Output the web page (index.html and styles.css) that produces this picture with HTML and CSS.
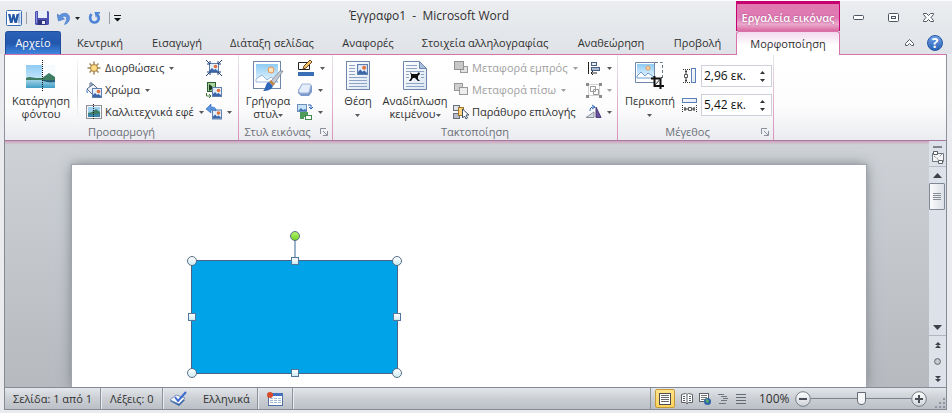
FILE: index.html
```html
<!DOCTYPE html>
<html lang="el">
<head>
<meta charset="utf-8">
<meta name="viewport" content="width=device-width, initial-scale=1">
<title>Έγγραφο1 - Microsoft Word</title>
<link rel="stylesheet" href="styles.css">
</head>
<body>
<svg class="defs" aria-hidden="true">
  <defs>
    <linearGradient id="sky" x1="0" y1="0" x2="0" y2="1"><stop offset="0" stop-color="#8ecbf3"/><stop offset="1" stop-color="#eaf7ff"/></linearGradient>
    <linearGradient id="sea" x1="0" y1="0" x2="0" y2="1"><stop offset="0" stop-color="#b8e0f0"/><stop offset="1" stop-color="#3f9cc4"/></linearGradient>
    <linearGradient id="paper" x1="0" y1="0" x2="1" y2="1"><stop offset="0" stop-color="#ffffff"/><stop offset="1" stop-color="#dbe6f3"/></linearGradient>
    <linearGradient id="knob" x1="0" y1="0" x2="0" y2="1"><stop offset="0" stop-color="#ffffff"/><stop offset="1" stop-color="#cfd3d9"/></linearGradient>
    <symbol id="mini" viewBox="0 0 10 10">
      <rect x=".5" y=".5" width="9" height="9" fill="#e4eefb" stroke="#5f7fae"/>
      <path d="M1 9V7l2-2 2 2 1.500-1L9 8v1z" fill="#3a66a8"/>
      <circle cx="6.500" cy="3.500" r="1.800" fill="#e2703a"/>
    </symbol>
    <symbol id="caret" viewBox="0 0 5 3"><path d="M0 0h5L2.500 3z" fill="currentColor"/></symbol>
  </defs>
</svg>

<div class="window">
  <header class="chrome">
    <div class="title-row">
      <div class="quick">
        <svg class="app" width="17" height="17" viewBox="0 0 17 17" aria-hidden="true"><rect x=".5" y=".5" width="15" height="15" rx="1" fill="#fff" stroke="#3c6eb4"/><path d="M12 2h3v13h-3" fill="#d4e3f5"/><path d="M12 4h2M12 6h2M12 8h2M12 10h2M12 12h2" stroke="#7097cc"/><path d="M2 4h2.500l1 5 1-5h2l1 5 1-5H13l-2 9H8.500l-1-4-1 4H4z" fill="#2458a6"/></svg>
        <span class="bar"></span>
        <button type="button" aria-label="Αποθήκευση"><svg width="14" height="14" viewBox="0 0 14 14"><path d="M0 1l1-1h12l1 1v12l-1 1H1l-1-1z" fill="#4a50b0"/><path d="M3 0h9v7H3z" fill="#e9effa"/><path d="M1 1h1v11H1z" fill="#8d92dd"/><path d="M3 9h8v5H3z" fill="#30347e"/><path d="M7 10h3v3H7z" fill="#e8e8f4"/></svg></button>
        <button type="button" class="undo" aria-label="Αναίρεση"><svg width="14" height="13" viewBox="0 0 14 13"><path d="M0 2l1.500 7 6-2-2.500-2c2-1.500 4.500-1 4.500 1.500S8.500 10 7.500 12.500C11 11.500 12.500 9 12.500 6 12.500 1 7-.5 2.500 3.500z" fill="#5f92df" stroke="#3b70c2" stroke-width=".6"/></svg><svg class="caret" width="5" height="3"><use href="#caret"/></svg></button>
        <button type="button" aria-label="Επανάληψη"><svg width="13" height="13" viewBox="0 0 13 13"><path d="M3.500 2C1 5 2 10.500 6.500 10.500S12 5 9 2.500" fill="none" stroke="#4f85d6" stroke-width="2.600"/><path d="M6.500 0H12v1.500L9.500 2 8 6.500z" fill="#4f85d6"/></svg></button>
        <span class="bar"></span>
        <button type="button" class="more" aria-label="Προσαρμογή γραμμής"><svg width="7" height="7" viewBox="0 0 7 7"><path d="M0 0h7v1H0zM0 3h7L3.500 6.500z" fill="#111"/></svg></button>
      </div>
      <h1>Έγγραφο1&nbsp; -&nbsp; Microsoft Word</h1>
    </div>
    <div class="context-title">Εργαλεία εικόνας</div>
    <div class="win-buttons">
      <button type="button" aria-label="Ελαχιστοποίηση"><svg width="12" height="6" viewBox="0 0 12 6"><rect x=".5" y=".5" width="10" height="4" rx="1" fill="#fff" stroke="#4d5563"/></svg></button>
      <button type="button" aria-label="Μεγιστοποίηση"><svg width="12" height="10" viewBox="0 0 12 10"><rect x=".5" y=".5" width="10" height="8" rx="1" fill="#fff" stroke="#4d5563"/><rect x="3.500" y="3.500" width="4" height="2" fill="#fff" stroke="#4d5563"/></svg></button>
      <button type="button" aria-label="Κλείσιμο"><svg width="12" height="10" viewBox="0 0 12 10"><path d="M.5.5h3l2 2 2-2h3v1L8 4.500l2.500 3v1h-3l-2-2-2 2h-3v-1L3 4.500.5 1.500z" fill="#fff" stroke="#4d5563"/></svg></button>
    </div>
    <nav class="tabs" aria-label="Κορδέλα">
      <a class="file" href="#file">Αρχείο</a>
      <a href="#home">Κεντρική</a>
      <a href="#insert">Εισαγωγή</a>
      <a href="#layout">Διάταξη σελίδας</a>
      <a href="#refs">Αναφορές</a>
      <a href="#mail">Στοιχεία αλληλογραφίας</a>
      <a href="#review">Αναθεώρηση</a>
      <a href="#view">Προβολή</a>
    </nav>
    <a class="context-tab" href="#format" aria-current="page">Μορφοποίηση</a>
    <div class="help">
      <button type="button" aria-label="Ελαχιστοποίηση κορδέλας"><svg width="9" height="7" viewBox="0 0 9 7"><path d="M.5 4.500l4-4 4 4v2h-2l-2-2-2 2h-2z" fill="#fff" stroke="#555c68"/></svg></button>
      <button type="button" class="help-button" aria-label="Βοήθεια">?</button>
    </div>
  </header>

  <section class="ribbon">
    <section class="group adjust">
      <div class="tools">
        <button type="button" class="big ruled">
          <svg width="30" height="32" viewBox="0 0 30 32"><rect x="0" y="5" width="16" height="23" fill="url(#sky)"/><rect x="16" y="5" width="13" height="23" fill="#e8f4fb" opacity=".35"/><path d="M0 18h29v10H0z" fill="url(#sea)"/><path d="M16 18l7-5 3 2 3 2v3H0v-2c4-2 7 0 10 0z" fill="#3f7d63"/><path d="M17 20h12v2c-5 1-9 0-12-1z" fill="#2b6178"/><path d="M16.500 0v32" stroke="#111" stroke-dasharray="1 1"/></svg>
          <span>Κατάργηση<br>φόντου</span>
        </button>
        <div class="stack">
          <button type="button" class="row"><svg width="16" height="16" viewBox="0 0 16 16"><path d="M8 1.500v13M1.500 8h13M3.500 3.500l9 9M12.500 3.500l-9 9" stroke="#a3865a" stroke-width="1.500"/><circle cx="8" cy="8" r="3.500" fill="#ffdc82" stroke="#a3803f"/></svg>Διορθώσεις<svg class="caret" width="5" height="3"><use href="#caret"/></svg></button>
          <button type="button" class="row"><svg width="16" height="16" viewBox="0 0 16 16"><path d="M1 7l6-5 4 4-5 6z" fill="#eef2f8" stroke="#566a8c"/><path d="M4 5V1h2v3" fill="none" stroke="#566a8c"/><path d="M1 7c-1 2-1 4 1 4z" fill="#3a76c0"/><use href="#mini" x="6" y="6" width="10" height="10"/></svg>Χρώμα<svg class="caret" width="5" height="3"><use href="#caret"/></svg></button>
          <button type="button" class="row"><svg width="16" height="16" viewBox="0 0 16 16"><rect x=".5" y="1.500" width="15" height="13" fill="#f7f7f7" stroke="#8d9096"/><path d="M2 3h12v10H2z" fill="#9fd3ef"/><path d="M2 9l4-1 4-3 4 3v2H2z" fill="#3e7d68"/><path d="M2 10h12v3H2z" fill="#3a84a8"/><path d="M7.500 0v16" stroke="#222" stroke-dasharray="1 1"/></svg>Καλλιτεχνικά εφέ<svg class="caret" width="5" height="3"><use href="#caret"/></svg></button>
        </div>
        <div class="stack">
          <button type="button" class="row" aria-label="Συμπίεση εικόνων"><svg width="16" height="16" viewBox="0 0 16 16"><use href="#mini" x="3" y="3" width="10" height="10"/><path d="M0 0l4 4M4 1v3H1M16 0l-4 4M12 1v3h3M0 16l4-4M4 15v-3H1M16 16l-4-4M12 15v-3h3" fill="none" stroke="#1e3f7a"/></svg></button>
          <button type="button" class="row" aria-label="Αλλαγή εικόνας"><svg width="16" height="16" viewBox="0 0 16 16"><rect x="1.500" y=".5" width="8" height="9" fill="#a9d39b" stroke="#2b5e35"/><path d="M3 2l5 4-5 3z" fill="#16391f"/><use href="#mini" x="6" y="5" width="10" height="10"/><path d="M.5 11v3h4M3 12l2 2-2 2" fill="none" stroke="#3f7a3a"/></svg></button>
          <button type="button" class="row" aria-label="Επαναφορά εικόνας"><svg width="16" height="16" viewBox="0 0 16 16"><use href="#mini" x="6" y="5" width="10" height="11"/><path d="M0 5l5-5v3c4 0 5 1 5 4-1-1-3-1-5-1v3z" fill="#5b94e0" stroke="#2d66b5" stroke-width=".6"/></svg><svg class="caret" width="5" height="3"><use href="#caret"/></svg></button>
        </div>
      </div>
      <h2>Προσαρμογή</h2>
    </section>

    <section class="group styles">
      <div class="tools">
        <button type="button" class="big">
          <svg width="32" height="32" viewBox="0 0 32 32"><rect x="1.500" y="1.500" width="27" height="27" fill="#fff" stroke="#6e87ab"/><rect x="4" y="4" width="22" height="18" fill="url(#sky)"/><path d="M4 22v-3l6-4 5 5 4-3 7 5z" fill="#fff" stroke="#7ba4d2" stroke-width=".8"/><circle cx="19" cy="10" r="3" fill="#ffe2bb" stroke="#ea9450"/><path d="M31 11l-9 13-3-3 9-10z" fill="#c5ccd6" stroke="#6d7686" stroke-width=".7"/><path d="M19 20l4 4-2 2-4-4z" fill="#c08446"/><path d="M17 22l4 4c-1 4-6 5-10 5 3-2 2-8 6-9z" fill="#2e66b8"/></svg>
          <span>Γρήγορα<br>στυλ<svg class="caret" width="5" height="3"><use href="#caret"/></svg></span>
        </button>
        <div class="stack">
          <button type="button" class="row" aria-label="Περίγραμμα εικόνας"><svg width="18" height="16" viewBox="0 0 18 16"><path d="M1.500 2.500h11v7h-11z" fill="#fff" stroke="#222"/><path d="M6 9l1-3 6-6 2 2-6 6z" fill="#f5c46a" stroke="#70481f"/><path d="M1 12h16v4H1z" fill="#3a6fb8"/></svg><svg class="caret" width="5" height="3"><use href="#caret"/></svg></button>
          <button type="button" class="row" aria-label="Εφέ εικόνας"><svg width="16" height="16" viewBox="0 0 16 16"><path d="M5 2h8l2 2v6l-3 4H4l-3-3V8z" fill="#7e9acb"/><path d="M5 2h8l1 1-2 7-1 1H3L1.500 9z" fill="#e3edfb" stroke="#a3b7da"/></svg><svg class="caret" width="5" height="3"><use href="#caret"/></svg></button>
          <button type="button" class="row" aria-label="Διάταξη εικόνας"><svg width="16" height="16" viewBox="0 0 16 16"><rect x=".5" y=".5" width="9" height="7" fill="#c6e3fa" stroke="#6f8fb8"/><path d="M1 7l3-3 2 2 2-1 2 2z" fill="#3f73b4"/><path d="M11 1h3v4M12 3l2 2 2-2" fill="none" stroke="#2c62b4"/><path d="M3 8h8v3h4v2H7v2H3z" fill="#4f9b59"/><rect x="8.500" y="11.500" width="6" height="4" fill="#fff" stroke="#448a50"/></svg><svg class="caret" width="5" height="3"><use href="#caret"/></svg></button>
        </div>
      </div>
      <h2>Στυλ εικόνας</h2>
      <button type="button" class="launcher" aria-label="Μορφοποίηση εικόνας"><svg width="8" height="8" viewBox="0 0 8 8"><path d="M.5 6V.5H6M3 3l4 4M7.500 3v4.500H3" fill="none" stroke="#888f99"/></svg></button>
    </section>

    <section class="group arrange">
      <div class="tools">
        <button type="button" class="big">
          <svg width="24" height="30" viewBox="0 0 24 30"><rect x=".5" y=".5" width="23" height="28" fill="url(#paper)" stroke="#6e87ab"/><path d="M3 4.500h6M3 7.500h6M3 10.500h6M3 13.500h6M3 16.500h18M3 19.500h18M3 22.500h18M3 25.500h18" stroke="#8ea4c4"/><use href="#mini" x="11" y="3" width="11" height="11"/></svg>
          <span>Θέση<br><svg class="caret" width="5" height="3"><use href="#caret"/></svg></span>
        </button>
        <button type="button" class="big">
          <svg width="24" height="30" viewBox="0 0 24 30"><path d="M.5.5h16l7 7v21H.5z" fill="url(#paper)" stroke="#6e87ab"/><path d="M16.500.5v7h7z" fill="#a8c0de" stroke="#6e87ab"/><path d="M3 4.500h11M3 7.500h11M3 10.500h18M3 13.500h3M18 13.500h3M3 16.500h3M18 16.500h3M3 22.500h18M3 25.500h18" stroke="#8ea4c4"/><path d="M7 11l2 2h5l2-2 1 2-2 2v3l2 2h-2l-3-3h-2l-2 3H6l2-3v-3z" fill="#111"/></svg>
          <span>Αναδίπλωση<br>κειμένου<svg class="caret" width="5" height="3"><use href="#caret"/></svg></span>
        </button>
        <div class="stack">
          <button type="button" class="row" disabled><svg width="16" height="16" viewBox="0 0 16 16"><rect x="7.500" y="6.500" width="7" height="6" fill="#e2e2e2" stroke="#9b9b9b"/><rect x="1.500" y="1.500" width="9" height="8" fill="#c8c8c8" stroke="#929292"/></svg>Μεταφορά εμπρός<svg class="caret" width="5" height="3"><use href="#caret"/></svg></button>
          <button type="button" class="row" disabled><svg width="16" height="16" viewBox="0 0 16 16"><rect x="1.500" y="1.500" width="8" height="7" fill="#d0d0d0" stroke="#989898"/><rect x="6.500" y="5.500" width="8" height="7" fill="#ededed" stroke="#989898"/></svg>Μεταφορά πίσω<svg class="caret" width="5" height="3"><use href="#caret"/></svg></button>
          <button type="button" class="row"><svg width="16" height="16" viewBox="0 0 16 16"><rect x=".5" y="1.500" width="6" height="5" fill="#dfe3ea" stroke="#69707c"/><rect x=".5" y="9.500" width="6" height="5" fill="#b8bec8" stroke="#69707c"/><rect x="5.500" y="3.500" width="5" height="8" fill="#ffd37a" stroke="#a0762c"/><path d="M9.500 5v9l2-2 1.500 3 1.500-1-1.500-3h3z" fill="#fff" stroke="#42546f"/></svg>Παράθυρο επιλογής</button>
        </div>
        <div class="stack">
          <button type="button" class="row" aria-label="Στοίχιση"><svg width="16" height="14" viewBox="0 0 16 14"><path d="M2 1h1v12H2z" fill="#222"/><rect x="5.500" y="1.500" width="5" height="3" fill="#e8eef6" stroke="#4a5f80"/><rect x="5.500" y="6.500" width="8" height="3" fill="#a9bad3" stroke="#4a5f80"/><path d="M5 12h6M7 10l-2 2 2 2" fill="none" stroke="#222"/></svg><svg class="caret" width="5" height="3"><use href="#caret"/></svg></button>
          <button type="button" class="row" aria-label="Ομαδοποίηση" disabled><svg width="16" height="16" viewBox="0 0 16 16"><path d="M2.500 2.500h11v11h-11z" fill="none" stroke="#a5a5a5" stroke-dasharray="1 1"/><path d="M4.500 4.500h5v5h-5zM7.500 7.500h5v5h-5z" fill="none" stroke="#999"/><path d="M0 1h3v3H0zM13 1h3v3h-3zM0 13h3v3H0zM13 13h3v3h-3z" fill="#8b8b8b"/></svg><svg class="caret" width="5" height="3"><use href="#caret"/></svg></button>
          <button type="button" class="row" aria-label="Περιστροφή"><svg width="16" height="16" viewBox="0 0 16 16"><path d="M0 13.500h8V8z" fill="#d8dce2" stroke="#8b919c"/><path d="M10 13.500V3l5 10.500z" fill="#67529a" stroke="#4c3d7b"/><path d="M4 7c0-3 1-4 4-4M6 1l3 2-3 2" fill="none" stroke="#2d66b5"/></svg><svg class="caret" width="5" height="3"><use href="#caret"/></svg></button>
        </div>
      </div>
      <h2>Τακτοποίηση</h2>
    </section>

    <section class="group size">
      <div class="tools">
        <button type="button" class="big">
          <svg width="30" height="30" viewBox="0 0 30 30"><path d="M.5 1.500h19v20H.5z" fill="#fff" stroke="#6e87ab"/><path d="M2 3h17v14H2z" fill="url(#sky)"/><path d="M2 17v-2l4-4 4 4 3-3 6 4v1z" fill="#fff" stroke="#6e9cd0"/><circle cx="13" cy="7" r="2" fill="#ffdcb0" stroke="#ea9450"/><path d="M20 1.500h7.500V17" fill="none" stroke="#69758c" stroke-dasharray="3 2"/><path d="M19.500 15v10H29M16 17.500h9.500V28" fill="none" stroke="#111" stroke-width="2"/><path d="M20 24l7-8" stroke="#333"/></svg>
          <span>Περικοπή<br><svg class="caret" width="5" height="3"><use href="#caret"/></svg></span>
        </button>
        <div class="fields">
          <div class="field">
            <label for="height" aria-label="Ύψος"><svg width="16" height="16" viewBox="0 0 16 16"><path d="M1 1.500h7M1 14.500h7" stroke="#333" stroke-dasharray="1 1"/><path d="M3 3.500h2M4 2v4M3 12.500h2M4 10v4" stroke="#333"/><path d="M2.500 6.500h3v3h-3z" fill="#fff" stroke="#555"/><rect x="9.500" y=".5" width="4" height="14" fill="url(#paper)" stroke="#5b7fb8"/></svg></label>
            <div class="spin"><input id="height" type="text" value="2,96 εκ."><span><button type="button" aria-label="Αύξηση ύψους"><svg width="5" height="3" viewBox="0 0 5 3"><path d="M0 3h5L2.500 0z" fill="#333"/></svg></button><button type="button" aria-label="Μείωση ύψους"><svg width="5" height="3" viewBox="0 0 5 3"><path d="M0 0h5L2.500 3z" fill="#333"/></svg></button></span></div>
          </div>
          <div class="field">
            <label for="width" aria-label="Πλάτος"><svg width="16" height="16" viewBox="0 0 16 16"><rect x=".5" y="1.500" width="14" height="4" fill="url(#paper)" stroke="#5b7fb8"/><path d="M.5 8v7M14.500 8v7" stroke="#333" stroke-dasharray="1 1"/><path d="M2 12h4M3 10v4M9 12h4M12 10v4" stroke="#333"/><path d="M6.500 10.500h3v3h-3z" fill="#fff" stroke="#555"/></svg></label>
            <div class="spin"><input id="width" type="text" value="5,42 εκ."><span><button type="button" aria-label="Αύξηση πλάτους"><svg width="5" height="3" viewBox="0 0 5 3"><path d="M0 3h5L2.500 0z" fill="#333"/></svg></button><button type="button" aria-label="Μείωση πλάτους"><svg width="5" height="3" viewBox="0 0 5 3"><path d="M0 0h5L2.500 3z" fill="#333"/></svg></button></span></div>
          </div>
        </div>
      </div>
      <h2>Μέγεθος</h2>
      <button type="button" class="launcher" aria-label="Διάταξη"><svg width="8" height="8" viewBox="0 0 8 8"><path d="M.5 6V.5H6M3 3l4 4M7.500 3v4.500H3" fill="none" stroke="#888f99"/></svg></button>
    </section>
  </section>

  <main class="workspace">
    <div class="canvas">
      <article class="page">
        <div class="shape">
          <i class="stem"></i><i class="turn"></i>
          <i class="round nw"></i><i class="square n"></i><i class="round ne"></i>
          <i class="square w"></i><i class="square e"></i>
          <i class="round sw"></i><i class="square s"></i><i class="round se"></i>
        </div>
      </article>
    </div>
    <aside class="scroll" aria-label="Κύλιση">
      <div class="split"></div>
      <button type="button" class="ruler" aria-label="Χάρακας"><svg width="12" height="13" viewBox="0 0 12 13"><path d="M.5 2.500h11v8H.5z" fill="#f5f6f8" stroke="#717780"/><path d="M1.500.5h4v3h-4zM6.500 9.500h4v3h-4z" fill="#fff" stroke="#5b6068"/><path d="M2 5l5 4M10 3L7 6" stroke="#5b6068" stroke-dasharray="1 1"/></svg></button>
      <button type="button" class="up" aria-label="Επάνω"><svg width="9" height="5" viewBox="0 0 9 5"><path d="M0 5h9L4.500 0z" fill="#3d4148"/></svg></button>
      <div class="thumb"><svg width="8" height="8" viewBox="0 0 8 8"><path d="M0 .5h8M0 2.500h8M0 4.500h8M0 6.500h8" stroke="#888d96"/></svg></div>
      <div class="track"></div>
      <button type="button" class="down" aria-label="Κάτω"><svg width="9" height="5" viewBox="0 0 9 5"><path d="M0 0h9L4.500 5z" fill="#3d4148"/></svg></button>
      <div class="browse">
        <button type="button" aria-label="Προηγούμενη σελίδα"><svg width="6" height="6" viewBox="0 0 6 6"><path d="M0 3l3-3 3 3zM0 6l3-3 3 3z" fill="#3d4148"/></svg></button>
        <button type="button" aria-label="Επιλογή αντικειμένου"><svg width="7" height="7" viewBox="0 0 7 7"><circle cx="3.500" cy="3.500" r="2.900" fill="#c9ccd0" stroke="#5d626a"/></svg></button>
        <button type="button" aria-label="Επόμενη σελίδα"><svg width="6" height="6" viewBox="0 0 6 6"><path d="M0 0l3 3 3-3zM0 3l3 3 3-3z" fill="#3d4148"/></svg></button>
      </div>
    </aside>
  </main>

  <footer class="status">
    <div class="cell pages">Σελίδα: 1 από 1</div>
    <div class="cell words">Λέξεις: 0</div>
    <div class="cell lang"><svg width="17" height="16" viewBox="0 0 17 16"><path d="M0 10l6-4 9 3-6 6z" fill="#3564a8"/><path d="M0 9l6-5 9 3-6 6z" fill="#f7f9fd" stroke="#6581b0" stroke-width=".8"/><path d="M5 6l3 4 8-9" fill="none" stroke="#3d68cf" stroke-width="2"/></svg>Ελληνικά</div>
    <div class="cell macro"><svg width="16" height="14" viewBox="0 0 16 14"><rect x="1.500" y="1.500" width="14" height="12" fill="#fff" stroke="#5071a5"/><path d="M1 1h14v3H1z" fill="#4471bd"/><path d="M3 6.500h11M3 8.500h11M3 10.500h11" stroke="#a5b9d9" stroke-dasharray="3 1"/><circle cx="3" cy="3" r="3" fill="#d64b2c"/></svg></div>
    <div class="views">
      <button type="button" class="selected" aria-label="Διάταξη εκτύπωσης"><svg width="12" height="12" viewBox="0 0 12 12"><rect x=".5" y=".5" width="11" height="11" fill="#fff" stroke="#4c4c4c"/><path d="M2 2.500h8M2 4.500h8M2 6.500h8M2 8.500h8" stroke="#696969"/></svg></button>
      <button type="button" aria-label="Ανάγνωση"><svg width="12" height="12" viewBox="0 0 12 12"><path d="M.5 1.500l4-1 1.500 1 1.500-1 4 1v8h-4L6 11l-1.500-1.500h-4z" fill="#fff" stroke="#5c6067"/><path d="M6 2v9M2 3.500h2M2 5.500h2M2 7.500h2M8 3.500h2M8 5.500h2M8 7.500h2" stroke="#5c6067"/></svg></button>
      <button type="button" aria-label="Διάταξη Web"><svg width="12" height="12" viewBox="0 0 12 12"><rect x=".5" y=".5" width="9" height="8" fill="#fff" stroke="#5c6067"/><path d="M2 2.500h6M2 4.500h6M2 6.500h4" stroke="#777"/><circle cx="8.500" cy="8.500" r="3.500" fill="#2e65a8"/><path d="M7 6l3 1-1 3-2-1z" fill="#5cae60"/></svg></button>
      <button type="button" aria-label="Διάρθρωση"><svg width="10" height="10" viewBox="0 0 10 10"><path d="M0 .5h6M3 2.500h6M5 4.500h5M3 6.500h6M1 9.500h7" stroke="#70757d"/></svg></button>
      <button type="button" aria-label="Πρόχειρο"><svg width="10" height="10" viewBox="0 0 10 10"><path d="M0 .5h10M0 3.500h10M0 6.500h10M0 9.500h10" stroke="#656a72"/></svg></button>
    </div>
    <span class="percent">100%</span>
    <div class="zoom">
      <button type="button" aria-label="Σμίκρυνση"><svg width="16" height="16" viewBox="0 0 16 16"><circle cx="8" cy="8" r="7.300" fill="url(#knob)" stroke="#777d87"/><path d="M4 8h8" stroke="#4a4f58" stroke-width="2"/></svg></button>
      <input type="range" min="0" max="100" value="50" aria-label="Ζουμ">
      <button type="button" aria-label="Μεγέθυνση"><svg width="16" height="16" viewBox="0 0 16 16"><circle cx="8" cy="8" r="7.300" fill="url(#knob)" stroke="#777d87"/><path d="M4 8h8M8 4v8" stroke="#4a4f58" stroke-width="2"/></svg></button>
    </div>
    <svg class="grip" width="11" height="11" viewBox="0 0 11 11"><path d="M8 0h2v2H8zM4 4h2v2H4zM8 4h2v2H8zM0 8h2v2H0zM4 8h2v2H4zM8 8h2v2H8z" fill="#8f959e"/></svg>
  </footer>
</div>
</body>
</html>
```

FILE: styles.css
```css
* { box-sizing: border-box; }

body {
  margin: 0;
  font: 11px/14px "Open Sans", "Noto Sans", sans-serif;
  color: #303030;
  background: #e9ebef;
}

button, input { font: inherit; color: inherit; }
button { display: flex; align-items: center; justify-content: center; padding: 0; border: 0; background: none; white-space: nowrap; }
a { color: inherit; text-decoration: none; }
svg { display: block; flex: none; }
h1, h2 { margin: 0; font: inherit; }
.defs { position: absolute; width: 0; height: 0; }

.window { display: flex; flex-direction: column; min-height: 100vh; padding-bottom: 3px; }

/* Title bar and tabs */
.chrome {
  display: grid;
  grid-template: 30px 23px / 1fr 104px 112px;
  border-top: 1px solid #fafbfc;
  background: linear-gradient(#ebedf0, #dfe3e7);
}
.title-row { display: flex; align-items: center; }
.quick { display: flex; align-items: center; gap: 8px; width: 122px; padding: 4px 0 0 6px; }
.quick .app { margin-right: -5px; }
.quick .undo { gap: 4px; }
.quick .more { margin-left: -4px; }
.bar { flex: none; width: 1px; height: 12px; background: #9a9fa7; }
.title-row h1 { flex: 1; font-size: 12px; text-align: center; }
.caret { color: #5a5a5a; }
.undo .caret { color: #222; }

.context-title {
  display: flex;
  align-items: center;
  justify-content: center;
  border: solid #c8006f;
  border-width: 3px 1px 0;
  background: linear-gradient(#e07ab0, #e07ab5 50%, #eba9cd 75%, #d8699f);
  color: #fff;
  font-weight: 600;
  text-shadow: 0 0 2px #a04478;
}
.win-buttons { display: flex; align-items: center; gap: 23px; padding: 4px 0 0 13px; }

.tabs {
  display: grid;
  grid-template-columns: 56px 78px 76px 114px 78px 156px 96px 77px;
  padding-left: 5px;
}
.tabs a, .context-tab { display: flex; align-items: center; justify-content: center; white-space: nowrap; }
.file {
  border: 1px solid #1f4f9c;
  border-bottom: 0;
  border-radius: 3px 3px 0 0;
  background: linear-gradient(#2b62b8, #2257ad 50%, #3f86de);
  color: #fff;
}
.context-tab {
  z-index: 1;
  margin-bottom: -1px;
  border: solid #d673aa;
  border-width: 1px 1px 0;
  border-radius: 3px 3px 0 0;
  background: linear-gradient(#f3d9ee, #fff 60%);
}
.help { display: flex; align-items: center; justify-content: flex-end; gap: 13px; padding-right: 9px; }
.help-button {
  width: 16px;
  height: 16px;
  border: 1px solid #2457a5;
  border-radius: 50%;
  background: linear-gradient(#6c9fe6, #2c63b8);
  color: #fff;
  font-size: 14px;
  font-weight: 700;
}

/* Ribbon */
.ribbon {
  display: flex;
  margin: 0 5px 0 4px;
  border: solid #8d929c;
  border-width: 1px 1px 0;
  border-top-color: #d673aa;
  background: linear-gradient(#fff, #fdfdfe 60%, #eaecef);
}
.group {
  position: relative;
  display: flex;
  flex-direction: column;
  border-right: 1px solid;
  border-image: linear-gradient(#e6e8ec, #dfa3c7 70%, #dc8fbc) 1;
}
.adjust { width: 234px; }
.styles { width: 94px; }
.arrange { width: 285px; }
.size { width: 156px; }
.tools { display: grid; height: 68px; padding-top: 2px; }
.adjust .tools { grid-template-columns: 73px 8px 120px 1fr; }
.adjust .tools .stack { grid-row: 1; }
.adjust .tools .stack:nth-child(2) { grid-column: 3; }
.adjust .tools .stack:nth-child(3) { grid-column: 4; }
.styles .tools { grid-template-columns: 58px 1fr; }
.arrange .tools { grid-template-columns: 50px 64px 6px 133px 1fr; }
.arrange .tools .stack { grid-row: 1; }
.arrange .tools .stack:nth-child(3) { grid-column: 4; }
.arrange .tools .stack:nth-child(4) { grid-column: 5; }
.size .tools { grid-template-columns: 64px 1fr; }

.group h2 { height: 17px; color: #6b6f78; line-height: 18px; text-align: center; }
.styles h2, .size h2 { padding-right: 16px; }
.launcher { position: absolute; right: 4px; bottom: 4px; }

.big { flex-direction: column; justify-content: flex-start; gap: 2px; padding-top: 3px; line-height: 13px; }
.big > svg { height: 32px; }
.big span .caret { display: inline-block; margin-left: 4px; vertical-align: middle; }
.big span br + .caret { margin: 0; }
.ruled { border-right: 1px solid; border-image: linear-gradient(#fff, #cfd2d8, #fff) 1; }

.stack { display: grid; grid-template-rows: repeat(3, 22px); }
.row { justify-content: flex-start; gap: 3px; }
.row .caret { margin-left: 2px; }
.row:disabled, .row:disabled .caret { color: #a0a0a0; }
.fields { display: flex; flex-direction: column; gap: 7px; padding-top: 8px; }
.field { display: flex; align-items: center; gap: 3px; }
.spin { display: flex; width: 71px; height: 22px; border: 1px solid #cdd0d6; background: #fff; }
.spin input { width: 52px; padding: 0 0 0 2px; border: 0; background: none; color: #111; font-size: 12px; }
.spin span { display: grid; flex: 1; padding: 2px 0; }

/* Document area */
.workspace { display: flex; flex: 1; margin: 0 5px 0 4px; border: solid #858a94; border-width: 1px 1px 0; border-top-color: #a3799c; }
.canvas {
  display: flex;
  flex: 1;
  padding: 24px 63px 0 67px;
  overflow: hidden;
  background: linear-gradient(#d49dbd 0, #c9ccd0 3px, #ced2d6 4px, #b6b9be);
}
.page { flex: 1; padding: 95px 0 0 119px; background: #fff; box-shadow: 0 0 1px 1px #a0a5ac, 0 0 12px #777c84; }
.shape { position: relative; width: 207px; height: 114px; border: 1px solid #47648c; background: #00a2e8; }
.shape i { position: absolute; border: 1px solid #596f86; background: linear-gradient(#fff, #cdebf2); transform: translate(-50%, -50%); }
.shape .round { width: 10px; height: 10px; border-radius: 50%; }
.shape .square { width: 8px; height: 8px; border-color: #52779c; }
.shape .nw, .shape .n, .shape .ne { top: 0; }
.shape .w, .shape .e { top: 50%; }
.shape .sw, .shape .s, .shape .se { top: 100%; }
.shape .nw, .shape .w, .shape .sw { left: 0; }
.shape .n, .shape .s, .shape .turn, .shape .stem { left: 50%; }
.shape .ne, .shape .e, .shape .se { left: 100%; }
.shape .turn { top: -25px; width: 10px; height: 10px; border-radius: 50%; background: linear-gradient(#b4f070, #76d627); }
.shape .stem { top: -12px; width: 1px; height: 20px; border: 0; background: #3c6a9c; }

.scroll { display: flex; flex-direction: column; width: 17px; padding-top: 4px; background: #dce1ea; }
.split { width: 9px; height: 2px; margin: 1px 4px; background: #7e858c; }
.ruler { height: 17px; }
.up { height: 17px; border-top: 1px solid #b7bdc6; }
.thumb { display: flex; align-items: center; justify-content: center; width: 16px; height: 27px; border: 1px solid #7f8896; border-radius: 1px; background: linear-gradient(90deg, #fafbfc, #dcdfe8); }
.track { flex: 1; }
.down { height: 17px; border-bottom: 1px solid #b0b6c0; }
.browse { display: grid; grid-template-rows: repeat(3, 17px); }

/* Status bar */
.status {
  display: flex;
  align-items: center;
  height: 23px;
  margin: 0 5px 0 4px;
  border: 1px solid #858a94;
  background: linear-gradient(#e3e6ea, #cdd1d6 45%, #bbc0c6);
}
.cell { display: flex; align-items: center; align-self: stretch; border-right: 1px solid #8e939b; box-shadow: 1px 0 #e9ebee; white-space: nowrap; }
.pages { width: 96px; padding-left: 8px; }
.words { width: 62px; padding-left: 9px; }
.lang { gap: 16px; width: 95px; padding-left: 7px; }
.macro { width: 35px; padding-left: 9px; }
.views { display: flex; align-items: center; align-self: stretch; gap: 5px; margin-left: auto; padding-left: 4px; border-left: 1px solid #8e939b; }
.views button { width: 13px; }
.views .selected { width: 20px; height: 19px; border: 1px solid #c49a3a; border-radius: 2px; background: linear-gradient(#ffe38a, #fdd35d); }
.percent { width: 31px; margin: 0 5px 0 12px; font-size: 12px; }
.zoom { display: flex; align-items: center; }
.zoom input { width: 100px; height: 16px; margin: 0; appearance: none; background: linear-gradient(#7d838c, #7d838c) center / 100% 1px no-repeat; }
.zoom input::-webkit-slider-thumb { appearance: none; width: 9px; height: 13px; border: 1px solid #666c76; border-radius: 1px 1px 5px 5px; background: #f4f5f6; }
.grip { align-self: flex-end; margin-left: 8px; }
```
